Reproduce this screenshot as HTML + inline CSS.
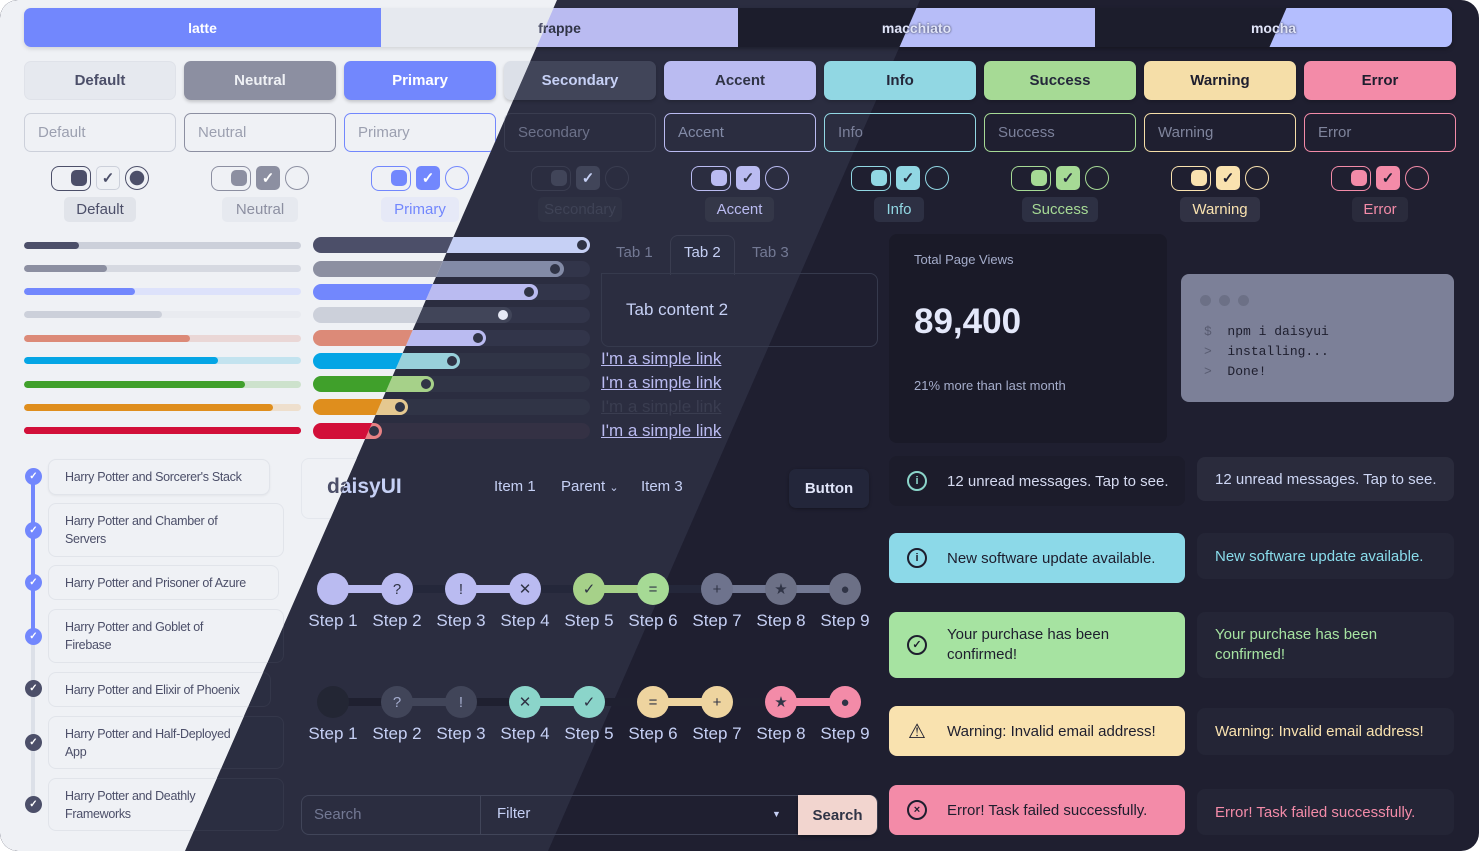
<!DOCTYPE html>
<html><head><meta charset="utf-8"><style>
*{box-sizing:border-box;margin:0;padding:0}
body{width:1479px;height:851px;overflow:hidden;background:#fff;font-family:"Liberation Sans",sans-serif}
.page{position:absolute;left:0;top:0;width:1479px;height:851px;border-radius:18px;overflow:hidden}
.L{position:absolute;left:0;top:0;width:1479px;height:851px}
.a{position:absolute}
.c{display:flex;align-items:center;justify-content:center}
.btn{position:absolute;top:61px;width:152px;height:39px;border-radius:7px;font-weight:bold;font-size:15px;display:flex;align-items:center;justify-content:center;box-shadow:0 2px 3px rgba(0,0,0,.18)}
.inp{position:absolute;top:113px;width:152px;height:39px;border-radius:7px;border:1px solid;font-size:15px;padding-left:13px;display:flex;align-items:center}
.tg{position:absolute;top:166px;width:40px;height:25px;border:1.5px solid;border-radius:8px}
.tg i{position:absolute;right:3px;top:3px;width:16px;height:16px;border-radius:5px}
.cb{position:absolute;top:166px;width:24px;height:24px;border-radius:5px;font-size:15px;display:flex;align-items:center;justify-content:center;font-weight:bold}
.rd{position:absolute;top:166px;width:24px;height:24px;border-radius:50%;border:1.5px solid}
.bd{position:absolute;top:197px;height:25px;border-radius:5px;font-size:15px;display:flex;align-items:center;justify-content:center}
.pg{position:absolute;left:24px;width:277px;height:7px;border-radius:4px;overflow:hidden}
.pg i{position:absolute;left:0;top:0;height:7px;border-radius:4px}
.rg{position:absolute;left:313px;width:277px;height:16px;border-radius:8px}
.rg i{position:absolute;left:0;top:0;height:16px;border-radius:8px}
.rg b{position:absolute;top:3px;width:10px;height:10px;border-radius:50%}
.tl{position:absolute;left:48px;width:236px;border-radius:8px;border:1px solid;font-size:12.5px;letter-spacing:-0.3px;line-height:18px;padding:0 16px;display:flex;align-items:center;white-space:nowrap}
.dot{position:absolute;left:25px;width:17px;height:17px;border-radius:50%;color:#fff;font-size:10px;font-weight:bold;display:flex;align-items:center;justify-content:center}
.st{position:absolute;width:32px;height:32px;border-radius:50%;font-size:15px;color:#303446;display:flex;align-items:center;justify-content:center}
.sl{position:absolute;height:8px}
.lab{position:absolute;width:64px;text-align:center;font-size:17px;color:#c6d0f5}
.al{position:absolute;border-radius:8px;font-size:15px;display:flex;align-items:center}
.ic{width:20px;height:20px;border:2px solid;border-radius:50%;margin:0 20px 0 18px;display:flex;align-items:center;justify-content:center;font-size:11px;font-weight:bold;flex:none}
</style></head><body><div class="page">

<!-- ============ DARK LAYER ============ -->
<div class="L" style="background:#1f1f30">
<svg class="a" style="left:0;top:0" width="1479" height="851">
<polygon points="0,0 920,0 548,851 0,851" fill="#24263a"/>
<polygon points="0,0 557,0 185,851 0,851" fill="#2b2e41"/>
<polygon points="557,0 920,0 548,851 185,851" fill="#2b2d40"/>
</svg>

<div class="a" style="left:24px;top:8px;width:1428px;height:39px;border-radius:7px;background:#1c1d2c;box-shadow:0 2px 4px rgba(0,0,0,.3)"></div>
<div class="a" style="left:381px;top:8px;width:357px;height:39px;background:#babbf1"></div>
<div class="a" style="left:738px;top:8px;width:357px;height:39px;background:#b7bdf8;clip-path:polygon(178.5px 0,357px 0,357px 39px,161.5px 39px)"></div>
<div class="a" style="left:1095px;top:8px;width:357px;height:39px;background:#b4befe;border-radius:0 7px 7px 0;clip-path:polygon(191.5px 0,357px 0,357px 39px,174.5px 39px)"></div>
<div class="a c" style="left:381px;top:8px;width:357px;height:39px;font-weight:bold;font-size:14px;color:#303446">frappe</div>
<div class="a c" style="left:738px;top:8px;width:357px;height:39px;font-weight:bold;font-size:14px;color:#e0e4f8;text-shadow:0 0 2px #24273a">macchiato</div>
<div class="a c" style="left:1095px;top:8px;width:357px;height:39px;font-weight:bold;font-size:14px;color:#e0e4f8;text-shadow:0 0 2px #1e1e2e">mocha</div>

<div class="btn" style="left:504px;background:#414559;color:#c6d0f5">Secondary</div>
<div class="btn" style="left:664px;background:#babbf1;color:#303446">Accent</div>
<div class="btn" style="left:824px;background:#91d7e3;color:#24273a">Info</div>
<div class="btn" style="left:984px;background:#a6da95;color:#24273a">Success</div>
<div class="btn" style="left:1144px;background:#f5dea8;color:#1e1e2e">Warning</div>
<div class="btn" style="left:1304px;background:#f38ba8;color:#1e1e2e">Error</div>

<div class="inp" style="left:504px;border-color:#3a3d50;color:#6c7189">Secondary</div>
<div class="inp" style="left:664px;border-color:#babbf1;color:#838ba7">Accent</div>
<div class="inp" style="left:824px;border-color:#91d7e3;color:#7b809a">Info</div>
<div class="inp" style="left:984px;border-color:#a6da95;color:#7b809a">Success</div>
<div class="inp" style="left:1144px;border-color:#f5dea8;color:#7f849c">Warning</div>
<div class="inp" style="left:1304px;border-color:#f38ba8;color:#7f849c">Error</div>

<div class="tg" style="left:531px;border-color:#3a3d50"><i style="background:#414559"></i></div>
<div class="cb" style="left:576px;background:#414559;color:#c6d0f5">✓</div>
<div class="rd" style="left:605px;border-color:#3a3d50"></div>
<div class="bd" style="left:538px;width:84px;background:#2f3244;color:#3f4356">Secondary</div>

<div class="tg" style="left:691px;border-color:#babbf1"><i style="background:#babbf1"></i></div>
<div class="cb" style="left:736px;background:#babbf1;color:#303446">✓</div>
<div class="rd" style="left:765px;border-color:#babbf1"></div>
<div class="bd" style="left:705px;width:69px;background:#343748;color:#babbf1">Accent</div>

<div class="tg" style="left:851px;border-color:#91d7e3"><i style="background:#91d7e3"></i></div>
<div class="cb" style="left:896px;background:#91d7e3;color:#24273a">✓</div>
<div class="rd" style="left:925px;border-color:#91d7e3"></div>
<div class="bd" style="left:874px;width:50px;background:#2d3043;color:#91d7e3">Info</div>

<div class="tg" style="left:1011px;border-color:#a6da95"><i style="background:#a6da95"></i></div>
<div class="cb" style="left:1056px;background:#a6da95;color:#24273a">✓</div>
<div class="rd" style="left:1085px;border-color:#a6da95"></div>
<div class="bd" style="left:1022px;width:76px;background:#2d3043;color:#a6da95">Success</div>

<div class="tg" style="left:1171px;border-color:#f9e2af"><i style="background:#f9e2af"></i></div>
<div class="cb" style="left:1216px;background:#f9e2af;color:#1e1e2e">✓</div>
<div class="rd" style="left:1245px;border-color:#f9e2af"></div>
<div class="bd" style="left:1180px;width:80px;background:#313244;color:#f9e2af">Warning</div>

<div class="tg" style="left:1331px;border-color:#f38ba8"><i style="background:#f38ba8"></i></div>
<div class="cb" style="left:1376px;background:#f38ba8;color:#1e1e2e">✓</div>
<div class="rd" style="left:1405px;border-color:#f38ba8"></div>
<div class="bd" style="left:1352px;width:56px;background:#2a2b3c;color:#f38ba8">Error</div>

<div class="rg" style="top:237px;background:#34374a"><i style="width:277px;background:#c6d0f5"></i><b style="left:264px;background:#303446"></b></div>
<div class="rg" style="top:261px;background:#32354a"><i style="width:251px;background:#838ba7"></i><b style="left:237px;background:#303446"></b></div>
<div class="rg" style="top:284px;background:#32354a"><i style="width:225px;background:#babbf1"></i><b style="left:211px;background:#303446"></b></div>
<div class="rg" style="top:307px;background:#32354a"><i style="width:199px;background:#414559"></i><b style="left:185px;background:#e6e9f5"></b></div>
<div class="rg" style="top:330px;background:#32354a"><i style="width:173px;background:#babbf1"></i><b style="left:160px;background:#303446"></b></div>
<div class="rg" style="top:353px;background:#303446"><i style="width:147px;background:#99d1db"></i><b style="left:134px;background:#303446"></b></div>
<div class="rg" style="top:376px;background:#303446"><i style="width:121px;background:#a6d189"></i><b style="left:108px;background:#303446"></b></div>
<div class="rg" style="top:399px;background:#303446"><i style="width:95px;background:#e5c890"></i><b style="left:82px;background:#303446"></b></div>
<div class="rg" style="top:423px;background:#343144"><i style="width:69px;background:#e78284"></i><b style="left:56px;background:#303446"></b></div>

<div class="a" style="left:616px;top:244px;font-size:15px;color:#737994">Tab 1</div>
<div class="a" style="left:670px;top:235px;width:65px;height:40px;border:1px solid #3a3d50;border-bottom:none;border-radius:8px 8px 0 0;background:#2b2e41"></div>
<div class="a" style="left:684px;top:244px;font-size:15px;color:#c6d0f5">Tab 2</div>
<div class="a" style="left:752px;top:244px;font-size:15px;color:#737994">Tab 3</div>
<div class="a" style="left:601px;top:273px;width:277px;height:74px;border:1px solid #363a4d;border-radius:0 8px 8px 8px"></div>
<div class="a" style="left:626px;top:300px;font-size:17px;color:#c6d0f5">Tab content 2</div>
<div class="a" style="left:601px;top:349px;font-size:17px;line-height:20px;color:#babbf1;text-decoration:underline">I'm a simple link</div>
<div class="a" style="left:601px;top:373px;font-size:17px;line-height:20px;color:#babbf1;text-decoration:underline">I'm a simple link</div>
<div class="a" style="left:601px;top:397px;font-size:17px;line-height:20px;color:#3a3d50;text-decoration:underline">I'm a simple link</div>
<div class="a" style="left:601px;top:421px;font-size:17px;line-height:20px;color:#babbf1;text-decoration:underline">I'm a simple link</div>

<div class="a" style="left:889px;top:234px;width:278px;height:209px;border-radius:8px;background:#1a1a28"></div>
<div class="a" style="left:914px;top:252px;font-size:13px;color:#a5adcb">Total Page Views</div>
<div class="a" style="left:914px;top:302px;font-size:35px;font-weight:bold;color:#e4e8fa">89,400</div>
<div class="a" style="left:914px;top:378px;font-size:13px;color:#a5adcb">21% more than last month</div>
<div class="a" style="left:1181px;top:274px;width:273px;height:128px;border-radius:8px;background:#7c8098"></div>
<div class="a" style="left:1200px;top:295px;width:11px;height:11px;border-radius:50%;background:#6c7086"></div>
<div class="a" style="left:1219px;top:295px;width:11px;height:11px;border-radius:50%;background:#6c7086"></div>
<div class="a" style="left:1238px;top:295px;width:11px;height:11px;border-radius:50%;background:#6c7086"></div>
<div class="a" style="left:1204px;top:322px;font-family:'Liberation Mono',monospace;font-size:13px;line-height:20px;color:#1e1e2e;white-space:pre"><span style="color:#585b70">$</span>  npm i daisyui
<span style="color:#585b70">&gt;</span>  installing...
<span style="color:#585b70">&gt;</span>  Done!</div>

<div class="al" style="left:889px;top:456px;width:296px;height:50px;background:#1c1c2b;color:#d5daf0"><span class="ic" style="border-color:#8bd5ca;color:#8bd5ca">i</span>12 unread messages. Tap to see.</div>
<div class="al" style="left:1197px;top:457px;width:257px;height:44px;background:#2a2b3c;color:#cdd6f4;padding-left:18px">12 unread messages. Tap to see.</div>
<div class="al" style="left:889px;top:533px;width:296px;height:50px;background:#8cd9e8;color:#1e1e2e"><span class="ic" style="border-color:#1e1e2e">i</span>New software update available.</div>
<div class="al" style="left:1197px;top:533px;width:257px;height:46px;background:#242536;color:#89dceb;padding-left:18px">New software update available.</div>
<div class="al" style="left:889px;top:612px;width:296px;height:66px;background:#a6e3a1;color:#1e1e2e;line-height:20px"><span class="ic" style="border-color:#1e1e2e">✓</span>Your purchase has been<br>confirmed!</div>
<div class="al" style="left:1197px;top:612px;width:257px;height:66px;background:#242536;color:#a6e3a1;padding-left:18px;line-height:20px">Your purchase has been<br>confirmed!</div>
<div class="al" style="left:889px;top:706px;width:296px;height:50px;background:#f9e2af;color:#1e1e2e"><span class="ic" style="border-radius:0;border:none;font-size:20px;font-weight:normal">⚠</span>Warning: Invalid email address!</div>
<div class="al" style="left:1197px;top:708px;width:257px;height:47px;background:#242536;color:#f9e2af;padding-left:18px">Warning: Invalid email address!</div>
<div class="al" style="left:889px;top:785px;width:296px;height:50px;background:#f38ba8;color:#1e1e2e"><span class="ic" style="border-color:#1e1e2e">×</span>Error! Task failed successfully.</div>
<div class="al" style="left:1197px;top:789px;width:257px;height:46px;background:#242536;color:#f38ba8;padding-left:18px">Error! Task failed successfully.</div>

<div class="tl" style="top:459px;width:222px;height:36px;background:#2b2e41;border-color:#34374a;color:#c6d0f5">Harry Potter and Sorcerer's Stack</div>
<div class="tl" style="top:503px;height:54px;background:#2b2e41;border-color:#34374a;color:#c6d0f5">Harry Potter and Chamber of<br>Servers</div>
<div class="tl" style="top:565px;width:231px;height:35px;background:#2b2e41;border-color:#34374a;color:#c6d0f5">Harry Potter and Prisoner of Azure</div>
<div class="tl" style="top:609px;height:54px;background:#2b2e41;border-color:#34374a;color:#c6d0f5">Harry Potter and Goblet of<br>Firebase</div>
<div class="tl" style="top:672px;width:223px;height:35px;background:#2b2e41;border-color:#34374a;color:#c6d0f5">Harry Potter and Elixir of Phoenix</div>
<div class="tl" style="top:716px;height:53px;background:#2b2e41;border-color:#34374a;color:#c6d0f5">Harry Potter and Half-Deployed<br>App</div>
<div class="tl" style="top:778px;height:53px;background:#2b2e41;border-color:#34374a;color:#c6d0f5">Harry Potter and Deathly<br>Frameworks</div>

<div class="a" style="left:327px;top:475px;font-size:21px;font-weight:bold;color:#c6d0f5">daisyUI</div>
<div class="a" style="left:494px;top:478px;font-size:15px;color:#c6d0f5">Item 1</div>
<div class="a" style="left:561px;top:478px;font-size:15px;color:#c6d0f5">Parent <span style="font-size:11px">⌄</span></div>
<div class="a" style="left:641px;top:478px;font-size:15px;color:#c6d0f5">Item 3</div>
<div class="a c" style="left:789px;top:469px;width:80px;height:39px;border-radius:7px;background:#23263a;box-shadow:0 1px 3px rgba(0,0,0,.3);font-weight:bold;font-size:15px;color:#e0e4f8">Button</div>

<div class="sl" style="left:333px;top:585px;width:512px;background:#24273a"></div>
<div class="sl" style="left:333px;top:585px;width:64px;background:#babbf1"></div>
<div class="sl" style="left:461px;top:585px;width:64px;background:#babbf1"></div>
<div class="sl" style="left:589px;top:585px;width:64px;background:#a6d189"></div>
<div class="sl" style="left:717px;top:585px;width:128px;background:#737994"></div>
<div class="st" style="left:317px;top:573px;background:#babbf1"></div>
<div class="st" style="left:381px;top:573px;background:#babbf1">?</div>
<div class="st" style="left:445px;top:573px;background:#babbf1">!</div>
<div class="st" style="left:509px;top:573px;background:#babbf1">✕</div>
<div class="st" style="left:573px;top:573px;background:#a6d189">✓</div>
<div class="st" style="left:637px;top:573px;background:#a6da95">=</div>
<div class="st" style="left:701px;top:573px;background:#6e738d">+</div>
<div class="st" style="left:765px;top:573px;background:#6c7086">★</div>
<div class="st" style="left:829px;top:573px;background:#6c7086">●</div>
<div class="sl" style="left:333px;top:698px;width:512px;background:#1f2030"></div>
<div class="sl" style="left:397px;top:698px;width:64px;background:#414559"></div>
<div class="sl" style="left:525px;top:698px;width:64px;background:#8bd5ca"></div>
<div class="sl" style="left:653px;top:698px;width:64px;background:#eed49f"></div>
<div class="sl" style="left:781px;top:698px;width:64px;background:#f38ba8"></div>
<div class="st" style="left:317px;top:686px;background:#232634"></div>
<div class="st" style="left:381px;top:686px;background:#414559;color:#a5adce">?</div>
<div class="st" style="left:445px;top:686px;background:#414559;color:#a5adce">!</div>
<div class="st" style="left:509px;top:686px;background:#8bd5ca">✕</div>
<div class="st" style="left:573px;top:686px;background:#8bd5ca">✓</div>
<div class="st" style="left:637px;top:686px;background:#eed49f">=</div>
<div class="st" style="left:701px;top:686px;background:#eed49f">+</div>
<div class="st" style="left:765px;top:686px;background:#f38ba8">★</div>
<div class="st" style="left:829px;top:686px;background:#f38ba8">●</div>
<div class="lab" style="left:301px;top:611px">Step 1</div><div class="lab" style="left:365px;top:611px">Step 2</div><div class="lab" style="left:429px;top:611px">Step 3</div><div class="lab" style="left:493px;top:611px">Step 4</div><div class="lab" style="left:557px;top:611px">Step 5</div><div class="lab" style="left:621px;top:611px">Step 6</div><div class="lab" style="left:685px;top:611px">Step 7</div><div class="lab" style="left:749px;top:611px">Step 8</div><div class="lab" style="left:813px;top:611px">Step 9</div>
<div class="lab" style="left:301px;top:724px">Step 1</div><div class="lab" style="left:365px;top:724px">Step 2</div><div class="lab" style="left:429px;top:724px">Step 3</div><div class="lab" style="left:493px;top:724px">Step 4</div><div class="lab" style="left:557px;top:724px">Step 5</div><div class="lab" style="left:621px;top:724px">Step 6</div><div class="lab" style="left:685px;top:724px">Step 7</div><div class="lab" style="left:749px;top:724px">Step 8</div><div class="lab" style="left:813px;top:724px">Step 9</div>

<div class="a" style="left:301px;top:795px;width:577px;height:40px;border:1px solid #414559;border-radius:8px"></div>
<div class="a" style="left:480px;top:796px;width:1px;height:38px;background:#414559"></div>
<div class="a" style="left:314px;top:806px;font-size:15px;color:#737994">Search</div>
<div class="a" style="left:497px;top:805px;font-size:15px;color:#c6d0f5">Filter</div>
<div class="a" style="left:772px;top:809px;font-size:9px;color:#c6d0f5">▼</div>
<div class="a c" style="left:798px;top:795px;width:79px;height:40px;border-radius:0 8px 8px 0;background:#f2d5cf;font-weight:bold;font-size:15px;color:#303446;box-shadow:0 2px 3px rgba(0,0,0,.3)">Search</div>
</div>

<!-- ============ LATTE LAYER ============ -->
<div class="L" style="background:#eff1f5;clip-path:polygon(0 0,557px 0,185px 851px,0 851px)">
<div class="a" style="left:24px;top:8px;width:1428px;height:39px;border-radius:7px;background:#e6e9ef;box-shadow:0 2px 4px rgba(0,0,0,.12)"></div>
<div class="a c" style="left:24px;top:8px;width:357px;height:39px;border-radius:7px 0 0 7px;background:#7287fd;color:#fff;font-weight:bold;font-size:14px">latte</div>
<div class="a c" style="left:381px;top:8px;width:357px;height:39px;font-weight:bold;font-size:14px;color:#4c4f69">frappe</div>

<div class="btn" style="left:24px;background:#e6e9ef;color:#4c4f69;border:1px solid #dfe2e9;box-shadow:none">Default</div>
<div class="btn" style="left:184px;background:#8c8fa1;color:#eff1f5">Neutral</div>
<div class="btn" style="left:344px;background:#7287fd;color:#fff">Primary</div>
<div class="btn" style="left:504px;background:#dce0e8;color:#4c4f69">Secondary</div>

<div class="inp" style="left:24px;border-color:#ccd0da;color:#9ca0b0">Default</div>
<div class="inp" style="left:184px;border-color:#8c8fa1;color:#9ca0b0">Neutral</div>
<div class="inp" style="left:344px;border-color:#7287fd;color:#9ca0b0">Primary</div>
<div class="inp" style="left:504px;border-color:#ccd0da;color:#9ca0b0">Secondary</div>

<div class="tg" style="left:51px;border-color:#4c4f69"><i style="background:#4c4f69"></i></div>
<div class="cb" style="left:96px;border:1px solid #ccd0da;color:#4c4f69">✓</div>
<div class="rd" style="left:125px;border-color:#4c4f69;background:radial-gradient(circle,#4c4f69 0 7px,transparent 7.5px)"></div>
<div class="bd" style="left:64px;width:72px;background:#e1e4ea;color:#4c4f69">Default</div>

<div class="tg" style="left:211px;border-color:#8c8fa1"><i style="background:#8c8fa1"></i></div>
<div class="cb" style="left:256px;background:#8c8fa1;color:#fff">✓</div>
<div class="rd" style="left:285px;border-color:#8c8fa1"></div>
<div class="bd" style="left:222px;width:76px;background:#e6e9ef;color:#8c8fa1">Neutral</div>

<div class="tg" style="left:371px;border-color:#7287fd"><i style="background:#7287fd"></i></div>
<div class="cb" style="left:416px;background:#7287fd;color:#fff">✓</div>
<div class="rd" style="left:445px;border-color:#7287fd"></div>
<div class="bd" style="left:381px;width:78px;background:#e6e9f7;color:#7287fd">Primary</div>

<div class="tg" style="left:531px;border-color:#dce0e8"><i style="background:#ccd0da"></i></div>

<div class="pg" style="top:242px;background:#ccd0da"><i style="width:55px;background:#4c4f69"></i></div>
<div class="pg" style="top:265px;background:#d6d9e1"><i style="width:83px;background:#8c8fa1"></i></div>
<div class="pg" style="top:288px;background:#dde2fb"><i style="width:111px;background:#7287fd"></i></div>
<div class="pg" style="top:311px;background:#e9ebf0"><i style="width:138px;background:#ccd0da"></i></div>
<div class="pg" style="top:335px;background:#ead7d6"><i style="width:166px;background:#dc8a78"></i></div>
<div class="pg" style="top:357px;background:#c3e3ef"><i style="width:194px;background:#04a5e5"></i></div>
<div class="pg" style="top:381px;background:#cde2cc"><i style="width:221px;background:#40a02b"></i></div>
<div class="pg" style="top:404px;background:#eedfcd"><i style="width:249px;background:#df8e1d"></i></div>
<div class="pg" style="top:427px;background:#d20f39"><i style="width:277px;background:#d20f39"></i></div>

<div class="rg" style="top:237px;background:#4c4f69"></div>
<div class="rg" style="top:261px;background:#8c8fa1"></div>
<div class="rg" style="top:284px;background:#7287fd"></div>
<div class="rg" style="top:307px;background:#ccd0da"></div>
<div class="rg" style="top:330px;background:#dc8a78"></div>
<div class="rg" style="top:353px;background:#04a5e5"></div>
<div class="rg" style="top:376px;background:#40a02b"></div>
<div class="rg" style="top:399px;background:#df8e1d"></div>
<div class="rg" style="top:423px;background:#d20f39"></div>

<div class="a" style="left:31px;top:476px;width:4px;height:160px;background:#7287fd"></div>
<div class="a" style="left:31px;top:636px;width:4px;height:170px;background:#dce0e8"></div>
<div class="dot" style="top:468px;background:#7287fd">✓</div>
<div class="dot" style="top:522px;background:#7287fd">✓</div>
<div class="dot" style="top:574px;background:#7287fd">✓</div>
<div class="dot" style="top:628px;background:#7287fd">✓</div>
<div class="dot" style="top:680px;background:#4c4f69">✓</div>
<div class="dot" style="top:734px;background:#4c4f69">✓</div>
<div class="dot" style="top:796px;background:#4c4f69">✓</div>
<div class="tl" style="top:459px;width:222px;height:36px;background:#eff1f5;border-color:#e1e4ea;color:#4c4f69;box-shadow:0 1px 2px rgba(0,0,0,.05)">Harry Potter and Sorcerer's Stack</div>
<div class="tl" style="top:503px;height:54px;background:#eff1f5;border-color:#e1e4ea;color:#4c4f69">Harry Potter and Chamber of<br>Servers</div>
<div class="tl" style="top:565px;width:231px;height:35px;background:#eff1f5;border-color:#e1e4ea;color:#4c4f69">Harry Potter and Prisoner of Azure</div>
<div class="tl" style="top:609px;height:54px;background:#eff1f5;border-color:#e1e4ea;color:#4c4f69">Harry Potter and Goblet of<br>Firebase</div>
<div class="tl" style="top:672px;width:223px;height:35px;background:#eff1f5;border-color:#e1e4ea;color:#4c4f69">Harry Potter and Elixir of Phoenix</div>
<div class="tl" style="top:716px;height:53px;background:#eff1f5;border-color:#e1e4ea;color:#4c4f69">Harry Potter and Half-Deployed<br>App</div>
<div class="tl" style="top:778px;height:53px;background:#eff1f5;border-color:#e1e4ea;color:#4c4f69">Harry Potter and Deathly<br>Frameworks</div>

<div class="a" style="left:301px;top:458px;width:577px;height:61px;border-radius:8px;background:#eff1f5;border:1px solid #e4e7ed"></div>
<div class="a" style="left:327px;top:475px;font-size:21px;font-weight:bold;color:#4c4f69">daisyUI</div>
</div>

</div></body></html>
